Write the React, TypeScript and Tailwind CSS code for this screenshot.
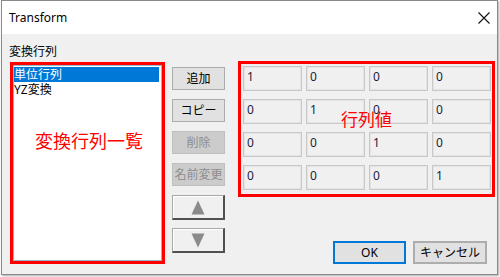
import React from "react";

const matrix = [
  [1, 0, 0, 0],
  [0, 1, 0, 0],
  [0, 0, 1, 0],
  [0, 0, 0, 1],
];

function Btn({ label, disabled }: { label: string; disabled?: boolean }) {
  return disabled ? (
    <div className="w-[53px] h-[23px] border border-[#bfbfbf] bg-[#cccccc] text-[#8d8d8d] text-[12px] leading-[21px] text-center">
      {label}
    </div>
  ) : (
    <div className="w-[53px] h-[23px] border border-[#adadad] bg-[#e1e1e1] text-black text-[12px] leading-[21px] text-center">
      {label}
    </div>
  );
}

function ArrowBtn({ up }: { up?: boolean }) {
  return (
    <div className="w-[53px] h-[25px] border-t border-l border-t-[#a8a8a8] border-l-[#a8a8a8] border-b-2 border-r-2 border-b-[#505050] border-r-[#505050] bg-[#f0f0f0] shadow-[inset_1px_1px_0_#ffffff] flex items-center justify-center">
      <svg width="14" height="15" viewBox="0 0 14 15">
        {up ? (
          <polygon points="7,0.5 13.5,14.5 0.5,14.5" fill="#8a8a8a" />
        ) : (
          <polygon points="0.5,0.5 13.5,0.5 7,14.5" fill="#8a8a8a" />
        )}
      </svg>
    </div>
  );
}

export default function App() {
  return (
    <div className="w-[500px] h-[277px] bg-white font-['Noto_Sans','Noto_Sans_CJK_JP',sans-serif] text-black">
      <div className="ml-[1px] w-[497px] h-[275px] border border-[#8a8a8a] shadow-[1px_1px_2px_rgba(0,0,0,0.35)] flex flex-col">
        {/* title bar */}
        <div className="h-[33px] bg-white flex items-center justify-between pl-[7px] pr-[7px]">
          <span className="text-[12px] leading-[16px] mt-[1px]">Transform</span>
          <svg width="12" height="12" viewBox="0 0 12 12" className="mt-[1px]">
            <path d="M0.5 0.5 L11.5 11.5 M11.5 0.5 L0.5 11.5" stroke="#111" strokeWidth="1.1" />
          </svg>
        </div>
        {/* body */}
        <div className="flex-1 bg-[#f0f0f0] flex pl-[7px] pt-[10px]">
          {/* left column */}
          <div className="flex flex-col">
            <div className="text-[12px] leading-[16px] mb-[2px]">変換行列</div>
            <div className="relative ml-[1px] w-[155px] h-[202px] border-[3px] border-[#ff0000]">
              <div className="w-full h-full border border-[#8fbccb] bg-white pt-[1px]">
                <div className="mr-[2px] h-[15px] bg-[#0078d7] text-white text-[12px] leading-[15px]">単位行列</div>
                <div className="h-[15px] text-[12px] leading-[15px]">YZ変換</div>
              </div>
              <div className="absolute left-[22px] top-[65px] text-[18px] leading-[22px] text-[#ff0000] whitespace-nowrap">
                変換行列一覧
              </div>
            </div>
          </div>
          {/* middle buttons */}
          <div className="ml-[7px] pt-[23px] flex flex-col gap-[9px]">
            <Btn label="追加" />
            <Btn label="コピー" />
            <Btn label="削除" disabled />
            <Btn label="名前変更" disabled />
            <div className="flex flex-col gap-[8px]">
              <ArrowBtn up />
              <ArrowBtn />
            </div>
          </div>
          {/* right */}
          <div className="ml-[13px] pt-[17px] flex flex-col">
            <div className="relative w-[257px] h-[136px] border-[3px] border-[#ff0000] pl-[2px] pt-[2px] flex flex-col gap-[8px]">
              {matrix.map((row, ri) => (
                <div key={ri} className="flex gap-[4px]">
                  {row.map((v, ci) => (
                    <div
                      key={ci}
                      className="w-[59px] h-[25px] border border-[#c8c8c8] bg-[#f0f0f0] shadow-[inset_0_0_0_1px_#e4e4e4] pl-[3px] pt-[3px] text-[12px] leading-[14px] text-[#1c1c3c]"
                    >
                      {v}
                    </div>
                  ))}
                </div>
              ))}
              <div className="absolute left-[100px] top-[45px] text-[17px] leading-[22px] text-[#ff0000] whitespace-nowrap">
                行列値
              </div>
            </div>
            <div className="mt-[44px] flex justify-end gap-[7px] pr-[8px]">
              <div className="w-[73px] h-[23px] border-2 border-[#0078d7] bg-[#e1e1e1] text-[12px] leading-[19px] text-center">
                OK
              </div>
              <div className="w-[74px] h-[23px] border-2 border-[#adadad] bg-[#e1e1e1] text-[12px] leading-[19px] text-center">
                キャンセル
              </div>
            </div>
          </div>
        </div>
      </div>
    </div>
  );
}
